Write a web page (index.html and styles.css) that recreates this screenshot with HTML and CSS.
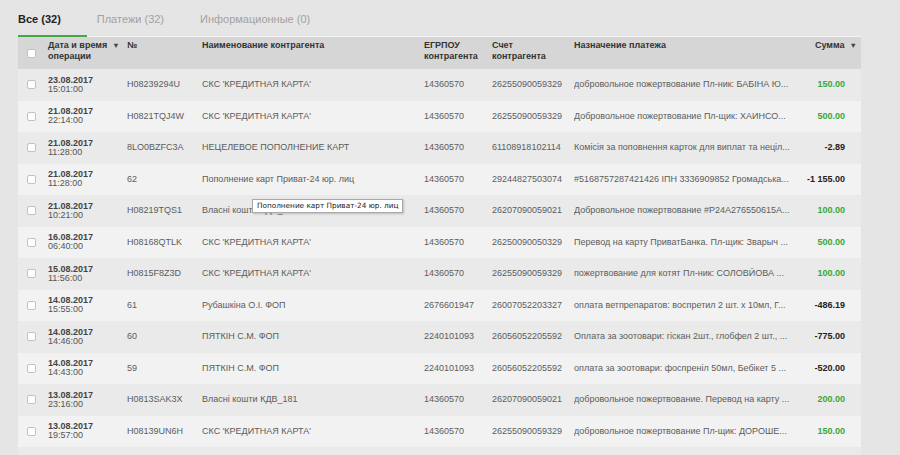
FILE: index.html
```html
<!DOCTYPE html>
<html lang="ru">
<head>
<meta charset="utf-8">
<title>Выписка</title>
<link rel="stylesheet" href="styles.css">
</head>
<body>
<div class="page">
  <div class="tabs">
    <div class="tab active">Все (32)</div>
    <div class="tab">Платежи (32)</div>
    <div class="tab">Информационные (0)</div>
  </div>
  <div class="table">
    <div class="grid head">
      <div class="c-cb"><span class="cb"></span></div>
      <div class="h-date"><span>Дата и время<br>операции</span><span class="arr">▼</span></div>
      <div>№</div>
      <div>Наименование контрагента</div>
      <div>ЕГРПОУ<br>контрагента</div>
      <div>Счет<br>контрагента</div>
      <div>Назначение платежа</div>
      <div class="h-sum">Сумма<span class="arr">▼</span></div>
    </div>

    <div class="grid row">
      <div class="c-cb"><span class="cb"></span></div>
      <div class="date"><b>23.08.2017</b><span>15:01:00</span></div>
      <div>H08239294U</div>
      <div>СКС 'КРЕДИТНАЯ КАРТА'</div>
      <div>14360570</div>
      <div>26255090059329</div>
      <div class="desc">добровольное пожертвование Пл-ник: БАБІНА Ю...</div>
      <div class="sum pos">150.00</div>
    </div>
    <div class="grid row">
      <div class="c-cb"><span class="cb"></span></div>
      <div class="date"><b>21.08.2017</b><span>22:14:00</span></div>
      <div>H0821TQJ4W</div>
      <div>СКС 'КРЕДИТНАЯ КАРТА'</div>
      <div>14360570</div>
      <div>26255090059329</div>
      <div class="desc">Добровольное пожертвование Пл-щик: ХАИНСО...</div>
      <div class="sum pos">500.00</div>
    </div>
    <div class="grid row">
      <div class="c-cb"><span class="cb"></span></div>
      <div class="date"><b>21.08.2017</b><span>11:28:00</span></div>
      <div>8LO0BZFC3A</div>
      <div>НЕЦЕЛЕВОЕ ПОПОЛНЕНИЕ КАРТ</div>
      <div>14360570</div>
      <div>61108918102114</div>
      <div class="desc">Комісія за поповнення карток для виплат та неціл...</div>
      <div class="sum neg">-2.89</div>
    </div>
    <div class="grid row">
      <div class="c-cb"><span class="cb"></span></div>
      <div class="date"><b>21.08.2017</b><span>11:28:00</span></div>
      <div>62</div>
      <div>Пополнение карт Приват-24 юр. лиц</div>
      <div>14360570</div>
      <div>29244827503074</div>
      <div class="desc">#5168757287421426 ІПН 3336909852 Громадська...</div>
      <div class="sum neg">-1 155.00</div>
    </div>
    <div class="grid row">
      <div class="c-cb"><span class="cb"></span></div>
      <div class="date"><b>21.08.2017</b><span>10:21:00</span></div>
      <div>H08219TQS1</div>
      <div>Власні кошти КДВ_181</div>
      <div>14360570</div>
      <div>26207090059021</div>
      <div class="desc">Добровольное пожертвование #P24A276550615A...</div>
      <div class="sum pos">100.00</div>
    </div>
    <div class="grid row">
      <div class="c-cb"><span class="cb"></span></div>
      <div class="date"><b>16.08.2017</b><span>06:40:00</span></div>
      <div>H08168QTLK</div>
      <div>СКС 'КРЕДИТНАЯ КАРТА'</div>
      <div>14360570</div>
      <div>26250090050329</div>
      <div class="desc">Перевод на карту ПриватБанка. Пл-щик: Зварыч ...</div>
      <div class="sum pos">500.00</div>
    </div>
    <div class="grid row">
      <div class="c-cb"><span class="cb"></span></div>
      <div class="date"><b>15.08.2017</b><span>11:56:00</span></div>
      <div>H0815F8Z3D</div>
      <div>СКС 'КРЕДИТНАЯ КАРТА'</div>
      <div>14360570</div>
      <div>26255090059329</div>
      <div class="desc">пожертвование для котят Пл-ник: СОЛОВЙОВА ...</div>
      <div class="sum pos">100.00</div>
    </div>
    <div class="grid row">
      <div class="c-cb"><span class="cb"></span></div>
      <div class="date"><b>14.08.2017</b><span>15:55:00</span></div>
      <div>61</div>
      <div>Рубашкіна О.І. ФОП</div>
      <div>2676601947</div>
      <div>26007052203327</div>
      <div class="desc">оплата ветпрепаратов: воспретил 2 шт. х 10мл, Г...</div>
      <div class="sum neg">-486.19</div>
    </div>
    <div class="grid row">
      <div class="c-cb"><span class="cb"></span></div>
      <div class="date"><b>14.08.2017</b><span>14:46:00</span></div>
      <div>60</div>
      <div>ПЯТКІН С.М. ФОП</div>
      <div>2240101093</div>
      <div>26056052205592</div>
      <div class="desc">Оплата за зоотовари: гіскан 2шт., глобфел 2 шт., ...</div>
      <div class="sum neg">-775.00</div>
    </div>
    <div class="grid row">
      <div class="c-cb"><span class="cb"></span></div>
      <div class="date"><b>14.08.2017</b><span>14:43:00</span></div>
      <div>59</div>
      <div>ПЯТКІН С.М. ФОП</div>
      <div>2240101093</div>
      <div>26056052205592</div>
      <div class="desc">оплата за зоотовари: фоспреніл 50мл, Бебікет 5 ...</div>
      <div class="sum neg">-520.00</div>
    </div>
    <div class="grid row">
      <div class="c-cb"><span class="cb"></span></div>
      <div class="date"><b>13.08.2017</b><span>23:16:00</span></div>
      <div>H0813SAK3X</div>
      <div>Власні кошти КДВ_181</div>
      <div>14360570</div>
      <div>26207090059021</div>
      <div class="desc">добровольное пожертвование. Перевод на карту ...</div>
      <div class="sum pos">200.00</div>
    </div>
    <div class="grid row">
      <div class="c-cb"><span class="cb"></span></div>
      <div class="date"><b>13.08.2017</b><span>19:57:00</span></div>
      <div>H08139UN6H</div>
      <div>СКС 'КРЕДИТНАЯ КАРТА'</div>
      <div>14360570</div>
      <div>26255090059329</div>
      <div class="desc">добровольное пожертвование Пл-щик: ДОРОШЕ...</div>
      <div class="sum pos">150.00</div>
    </div>
    <div class="grid row filler"></div>
  </div>
  <div class="tooltip">Пополнение карт Приват-24 юр. лиц</div>
</div>
</body>
</html>
```
FILE: styles.css
```css
html, body {
  margin: 0;
  height: 100%;
  overflow: hidden;
}
body {
  background: #e5e5e5;
  font-family: "Liberation Sans", Arial, sans-serif;
}
.page {
  position: relative;
  width: 843px;
  padding-left: 18px;
}
.tabs {
  display: flex;
  padding-top: 13px;
  border-bottom: 1px solid #f4f4f4;
}
.tab {
  font-size: 11px;
  line-height: 13px;
  color: #a2a2a2;
  padding: 0 26px 9px 0;
  margin-right: 10px;
  margin-bottom: -1px;
  border-bottom: 2px solid transparent;
}
.tab.active {
  color: #222;
  font-weight: bold;
  border-bottom-color: #46a946;
}
.grid {
  display: grid;
  grid-template-columns: 30px 79px 75px 222px 68px 82px 221px 66px;
}
.head {
  height: 32px;
  background: #d6d6d6;
  font-size: 9px;
  line-height: 11px;
  font-weight: bold;
  color: #333;
}
.head > div {
  padding-top: 3px;
}
.head > .c-cb {
  padding-top: 0;
}
.c-cb {
  display: flex;
  align-items: center;
  height: 100%;
}
.cb {
  box-sizing: border-box;
  width: 9px;
  height: 9px;
  margin-left: 9px;
  background: #fff;
  border: 1px solid #c2c2c2;
  border-radius: 2px;
}
.h-date {
  display: flex;
  align-items: flex-start;
}
.arr {
  font-size: 7.5px;
  line-height: 11px;
  margin-left: 5px;
  color: #444;
}
.h-sum {
  text-align: right;
  padding-right: 4px;
}
.row {
  height: 31.5px;
  align-items: center;
  font-size: 9px;
  line-height: 11px;
  color: #5c5c5c;
  background: #f2f2f2;
}
.row:nth-child(even) {
  background: #eaeaea;
}
.row > div {
  white-space: nowrap;
  overflow: hidden;
}
.date {
  display: flex;
  flex-direction: column;
  line-height: 9px;
}
.date b {
  color: #444;
}
.date span {
  color: #555;
}
.desc {
  text-overflow: ellipsis;
  padding-right: 2px;
}
.sum {
  text-align: right;
  padding-right: 16px;
  font-weight: bold;
}
.sum.pos {
  color: #38a838;
}
.sum.neg {
  color: #222;
}
.tooltip {
  position: absolute;
  left: 252px;
  top: 199px;
  height: 12px;
  padding: 0 4px;
  background: #fff;
  border: 1px solid #a8a8a8;
  box-shadow: 1px 1px 2px rgba(0, 0, 0, 0.2);
  font-family: "DejaVu Sans", sans-serif;
  font-size: 7.3px;
  line-height: 12px;
  color: #222;
  white-space: nowrap;
}
```
